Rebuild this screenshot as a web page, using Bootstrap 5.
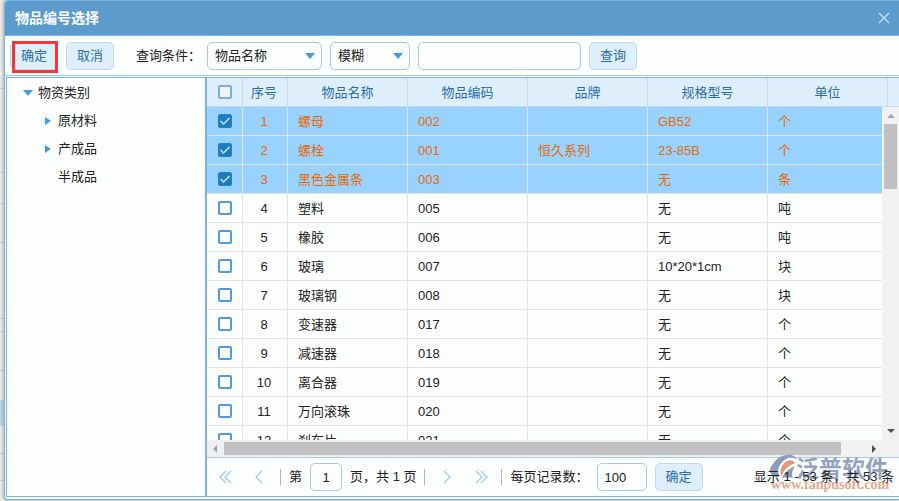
<!DOCTYPE html>
<html lang="zh-CN">
<head>
<meta charset="utf-8">
<meta name="viewport" content="width=device-width, initial-scale=1">
<title>物品编号选择</title>
<link href="https://cdn.jsdelivr.net/npm/bootstrap@5.3.0/dist/css/bootstrap.min.css" rel="stylesheet">
<style>
:root{--edge:#7ab5e2;--line:#a6cae4;--pale:#dfeefb;--ink:#2a6da3}
body{font:13px/20px "Liberation Sans","Noto Sans CJK SC",sans-serif;color:#222;background:#eceeee;overflow:hidden}
.stage{height:100vh;padding:0 0 1px 4px;position:relative}
.backdrop{position:absolute;left:0;width:4px;top:0;bottom:0}
.backdrop i{position:absolute;left:0;width:4px;height:1px;background:#bcd3e2}
.backdrop .band{height:26px;background:#bfd6e6}
.dialog{background:#fcfefe;border:1px solid var(--edge);border-right:0;border-radius:4px 0 0 4px;box-shadow:0 0 4px #888;position:relative}
.titlebar{height:35px;background:#5c9bcc;border-bottom:1px solid var(--edge);padding:0 7px 0 10px;border-radius:3px 0 0 0}
.titlebar h1{font-size:14px;line-height:20px;font-weight:700}
.tools{height:40px;border-bottom:1px solid var(--line);padding:0 5px}
.tools label{margin:0 6px 0 22px}
.btn-soft{--bs-btn-padding-x:0;--bs-btn-padding-y:3px;--bs-btn-font-size:13px;--bs-btn-line-height:20px;--bs-btn-color:#2a6da3;--bs-btn-bg:#dfeefb;--bs-btn-border-color:#c3d9ea;--bs-btn-border-radius:5px;--bs-btn-hover-bg:#cfe5f8;--bs-btn-hover-color:#2a6da3;width:48px;height:28px;flex:none}
.marked{position:relative}
.marked::after{content:"";position:absolute;inset:-1px 0 -3px 2px;border:3px solid #fb3535;pointer-events:none}
.field{height:28px;min-height:28px;border:1px solid var(--line);border-radius:5px;background-color:#fcfefe;font-size:13px;line-height:20px;padding:3px 7px;color:#222;flex:none}
.f-kind{width:115px}.f-mode{width:80px}.f-key{width:163px}.f-page{width:32px}.f-size{width:50px}
select.field{background-image:url("data:image/svg+xml,%3Csvg xmlns='http://www.w3.org/2000/svg' viewBox='0 0 10 6'%3E%3Cpath d='M0 0h10L5 6z' fill='%23439be0'/%3E%3C/svg%3E");background-size:10px 6px;background-position:right 6px center}
.work{margin:1px 0 2px 1px;border:1px solid var(--edge);border-right:0}
.tree{width:200px;border-right:2px solid var(--edge);padding:1px 0 0 16px}
.tree ul{padding-left:20px}
.tree a{height:28px;color:#222;gap:5px}
.tree svg{width:10px;height:10px;fill:#439be0}
.grid-table{table-layout:fixed;border-collapse:separate;border-spacing:0}
#items{width:681px}
.grid-table th,.grid-table td{height:29px;padding:2px 10px 0;border:solid #e3e3e3;border-width:0 1px 1px 0;white-space:nowrap;overflow:hidden;line-height:20px}
.grid-table th{background:var(--pale);border-color:#c8dae8;color:var(--ink);font-weight:400;text-align:center}
.grid-table th:last-child{border-right:0}
.grid-table th:nth-child(2),.grid-table td:nth-child(2){text-align:center;padding:2px 2px 0 0}
.grid-table .pick{padding:0}
.c-pick{width:36px}.c-no{width:45px}.c-data{width:120px}
.grid-table .picked td{background:#98d2fe;color:#e66a05}
.tick{appearance:none;display:block;width:14px;height:14px;margin:0 auto;border:2px solid #519ade;border-radius:2px;background:#fdfeff}
th .tick{border-color:#7daedb;background:#eef5fd}
.tick:checked{border:1px solid #2580c5;background:#1f7ac0 url("data:image/svg+xml,%3Csvg xmlns='http://www.w3.org/2000/svg' viewBox='0 0 12 12'%3E%3Cpath d='M1.5 6l3 3 6-6' fill='none' stroke='%23c3e6ff' stroke-width='1.5'/%3E%3C/svg%3E")}
.vbar{width:17px;background:#f1f1f1}
.hbar{height:17px;background:#f1f1f1}
.vbar svg,.hbar svg{width:17px;height:17px;flex:none;fill:#505050}
.vbar .thumb{width:13px;height:65px;background:#c1c1c1}
.hbar .thumb{height:13px;background:#c1c1c1}
.hbar .track{margin-right:17px}
.hbar .rest{width:24px}
.pager{height:39px;border-top:1px solid var(--line);padding:0 5px 0 11px;position:relative}
.turn{width:16px;height:16px;padding:0;border:0;background:none;flex:none}
.turn svg{width:16px;height:16px;display:block;fill:none;stroke:#9dcdf0;stroke-width:1.4}
.turn.close-x svg{stroke:#c7dff2}
.rule{width:1px;height:16px;background:#b5b5b5}
.s-12{margin-left:12px}.s-14{margin-left:14px}.s-18{margin-left:18px}
.total{position:relative}
.logo-mark{position:absolute;right:8px;bottom:1px;width:121px;height:41px;pointer-events:none}
</style>
<script src="https://cdn.jsdelivr.net/npm/bootstrap@5.3.0/dist/js/bootstrap.bundle.min.js"></script>
</head>
<body>
<div class="stage">
<div class="backdrop" id="backdrop"></div>
<main class="dialog d-flex flex-column h-100">
  <header class="titlebar d-flex align-items-center justify-content-between flex-shrink-0">
    <h1 class="m-0 text-white">物品编号选择</h1>
    <button class="turn close-x" type="button" aria-label="关闭"><svg viewBox="0 0 16 16"><path d="M3 3l10 10M13 3L3 13"/></svg></button>
  </header>
  <form class="tools d-flex align-items-center flex-shrink-0">
    <div class="marked me-2"><button class="btn btn-soft" type="button">确定</button></div>
    <button class="btn btn-soft" type="button">取消</button>
    <label class="text-nowrap" for="kind">查询条件：</label>
    <select id="kind" class="form-select field me-2 f-kind"><option>物品名称</option></select>
    <select class="form-select field me-2 f-mode" aria-label="匹配方式"><option>模糊</option></select>
    <input class="form-control field me-2 f-key" type="text" aria-label="关键字">
    <button class="btn btn-soft" type="button">查询</button>
  </form>
  <div class="work d-flex flex-grow-1 overflow-hidden">
    <nav class="tree flex-shrink-0">
      <a href="#" class="d-flex align-items-center text-decoration-none"><svg viewBox="0 0 10 10"><path d="M0 2h10L5 8z"/></svg>物资类别</a>
      <ul class="list-unstyled m-0">
        <li><a href="#" class="d-flex align-items-center text-decoration-none"><svg viewBox="0 0 10 10"><path d="M2 1v8l6-4z"/></svg>原材料</a></li>
        <li><a href="#" class="d-flex align-items-center text-decoration-none"><svg viewBox="0 0 10 10"><path d="M2 1v8l6-4z"/></svg>产成品</a></li>
        <li><a href="#" class="d-flex align-items-center text-decoration-none"><svg viewBox="0 0 10 10"></svg>半成品</a></li>
      </ul>
    </nav>
    <section class="d-flex flex-column flex-grow-1 overflow-hidden">
      <table class="grid-table w-100 flex-shrink-0">
        <colgroup><col class="c-pick"><col class="c-no"><col class="c-data"><col class="c-data"><col class="c-data"><col class="c-data"><col class="c-data"><col></colgroup>
        <thead><tr><th class="pick"><input class="tick" type="checkbox" aria-label="全选"></th><th>序号</th><th>物品名称</th><th>物品编码</th><th>品牌</th><th>规格型号</th><th>单位</th><th class="p-0"></th></tr></thead>
      </table>
      <div class="d-flex flex-grow-1 overflow-hidden">
        <div class="flex-grow-1 overflow-hidden">
          <table class="grid-table" id="items">
            <colgroup><col class="c-pick"><col class="c-no"><col class="c-data"><col class="c-data"><col class="c-data"><col class="c-data"><col class="c-data"></colgroup>
            <tbody></tbody>
          </table>
        </div>
        <div class="vbar d-flex flex-column align-items-center flex-shrink-0">
          <svg viewBox="0 0 17 17"><path fill="#a3a3a3" d="M5 11h8L9 7z"/></svg>
          <div class="thumb"></div>
          <svg class="mt-auto" viewBox="0 0 17 17"><path d="M5 6h8l-4 4z"/></svg>
        </div>
      </div>
      <div class="hbar d-flex align-items-center flex-shrink-0">
        <svg viewBox="0 0 17 17"><path fill="#a3a3a3" d="M10 5v8L6 9z"/></svg>
        <div class="track flex-grow-1 d-flex align-items-center"><div class="thumb flex-grow-1"></div><div class="rest"></div>
        <svg viewBox="0 0 17 17"><path d="M7 5v8l4-4z"/></svg></div>
      </div>
      <footer class="pager d-flex align-items-center flex-shrink-0 text-nowrap">
        <svg class="logo-mark" viewBox="0 0 121 41">
          <path fill="#8b9bb8" d="M10 3C4 7 0 13 0 17c1 4 4 6 7 6l3-1C6 18 8 9 18 4c4-1 7 0 9 2-2-5-8-7-17-3z"/>
          <path fill="#e0997b" d="M25 9c-4-5-10-3-13 3-2 4-2 8 0 11 1-7 6-11 13-14z"/>
          <path fill="#8b9bb8" d="M12 24c2-5 6-9 13-12-3 5-4 9-2 12-4-1-8-1-11 0z"/>
          <text x="26" y="23" font-size="23" font-weight="700" fill="#93a2bf" font-family="Noto Sans CJK SC, sans-serif">泛普软件</text>
          <text x="1" y="35" font-size="14" font-weight="700" fill="#e5a890" font-family="Liberation Serif, serif">www.fanpusoft.com</text>
        </svg>
        <button class="turn" type="button" aria-label="首页"><svg viewBox="0 0 16 16"><path d="M8 2L2 8l6 6M13 2L7 8l6 6"/></svg></button>
        <button class="turn s-18" type="button" aria-label="上一页"><svg viewBox="0 0 16 16"><path d="M10 2L4 8l6 6"/></svg></button>
        <span class="rule s-12"></span>
        <label class="ms-2" for="page">第</label>
        <input id="page" class="form-control field ms-2 me-2 f-page px-0 text-center" value="1">
        <span>页，共 1 页</span>
        <span class="rule ms-2"></span>
        <button class="turn s-14" type="button" aria-label="下一页"><svg viewBox="0 0 16 16"><path d="M5 2l6 6-6 6"/></svg></button>
        <button class="turn s-18" type="button" aria-label="末页"><svg viewBox="0 0 16 16"><path d="M3 2l6 6-6 6M8 2l6 6-6 6"/></svg></button>
        <span class="rule s-12"></span>
        <label class="ms-2" for="size">每页记录数：</label>
        <input id="size" class="form-control field ms-2 me-2 f-size" value="100">
        <button class="btn btn-soft" type="button">确定</button>
        <span class="total ms-auto">显示 1 - 53 条，共 53 条</span>
      </footer>
    </section>
  </div>
</main>
</div>
<script>
const rows=[["螺母","002","","GB52","个"],["螺栓","001","恒久系列","23-85B","个"],["黑色金属条","003","","无","条"],["塑料","005","","无","吨"],["橡胶","006","","无","吨"],["玻璃","007","","10*20*1cm","块"],["玻璃钢","008","","无","块"],["变速器","017","","无","个"],["减速器","018","","无","个"],["离合器","019","","无","个"],["万向滚珠","020","","无","个"],["刹车片","021","","无","个"]];
document.querySelector("#items tbody").innerHTML=rows.map((r,i)=>`<tr class="${i<3?"picked":""}"><td class="pick"><input class="tick" type="checkbox" aria-label="选择${r[0]}" ${i<3?"checked":""}></td><td>${i+1}</td>${r.map(c=>`<td>${c}</td>`).join("")}</tr>`).join("");
document.getElementById("backdrop").innerHTML=[88,172,203,242,318,331,370,453,480].map(y=>`<i style="top:${y}px"></i>`).join("")+`<i class="band" style="top:400px"></i>`;
</script>
</body>
</html>
